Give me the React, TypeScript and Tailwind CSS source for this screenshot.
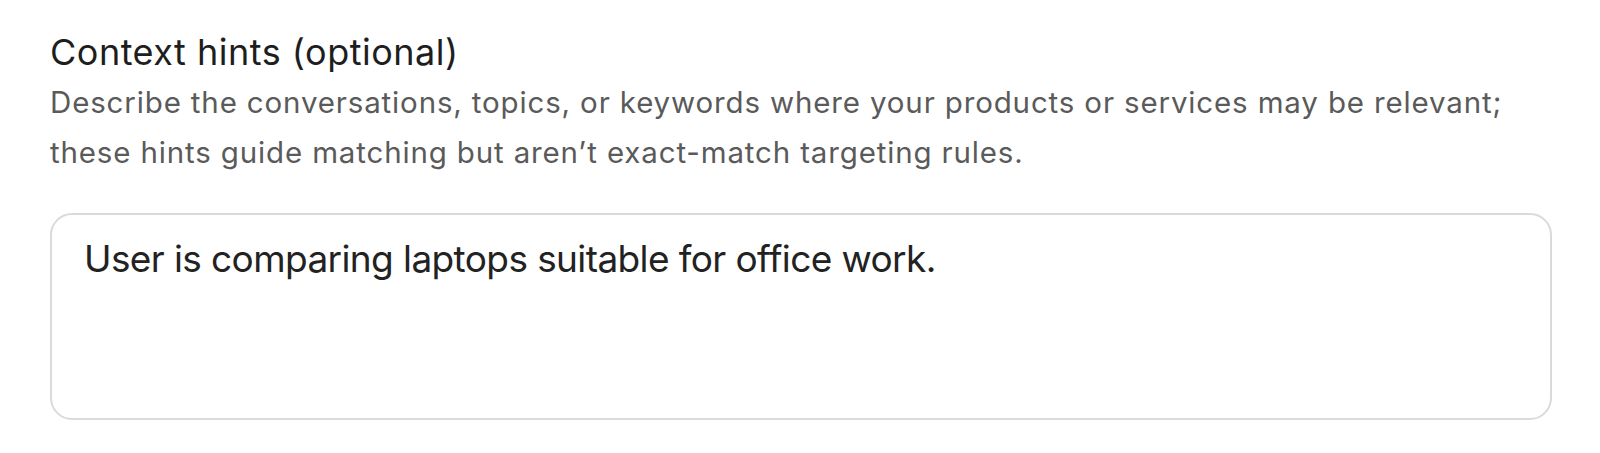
export default function App() {
  return (
    <div className="min-h-[453px] w-full bg-white pl-[50px] pr-[48px] pt-[30px]" style={{ fontFamily: "Inter, 'Noto Sans', sans-serif" }}>
      <label className="block text-[36px] leading-[44px] tracking-[0.5px] text-[#1e1e1e]">Context hints (optional)</label>
      <p className="mt-[4px] text-[29.5px] leading-[49.5px] tracking-[0.85px] text-[#5a5a5a]">
        Describe the conversations, topics, or keywords where your products or services may be relevant;
        <br />
        these hints guide matching but aren’t exact-match targeting rules.
      </p>
      <div className="mt-[36px] h-[207px] w-full rounded-[22px] border-2 border-[#dadada] px-[32px] pt-[20px]">
        <p className="text-[37px] leading-[48px] tracking-[-0.6px] text-[#222222]">User is comparing laptops suitable for office work.</p>
      </div>
    </div>
  );
}
